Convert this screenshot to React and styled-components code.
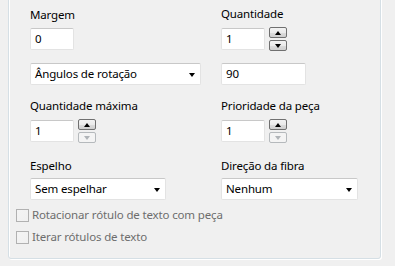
import React from "react";
import styled, { createGlobalStyle } from "styled-components";

const Global = createGlobalStyle`
  html, body { margin: 0; padding: 0; background: #f0f0f0; }
  body { font-family: "Noto Sans", "Segoe UI", sans-serif; font-size: 11.5px; letter-spacing: -0.15px; color: #000; }
  * { box-sizing: border-box; }
`;

const Page = styled.div`
  width: 395px;
  height: 266px;
  overflow: hidden;
  background: #f0f0f0;
`;

const Group = styled.div`
  margin: -10px 0 0 8px;
  width: 373px;
  border: 1px solid #d5dfe5;
  border-radius: 3px;
  box-shadow: inset 1px 1px 0 #fff, 1px 1px 0 #fff;
  padding: 15px 0 13px 7px;
`;

const Fields = styled.div`
  padding-left: 14px;
`;

const Row = styled.div`
  display: grid;
  grid-template-columns: 191px 1fr;
  align-items: start;
  margin-top: ${(p) => p.$top || 0}px;
`;

const Field = styled.div`
  display: flex;
  flex-direction: column;
  align-items: flex-start;
  padding-top: ${(p) => p.$offset || 0}px;
`;

const Label = styled.div`
  line-height: 16px;
  height: 16px;
  margin-bottom: ${(p) => p.$gap ?? 5}px;
  white-space: nowrap;
`;

const Controls = styled.div`
  display: flex;
  align-items: center;
  gap: 4px;
  height: ${(p) => (p.$spin ? 24 : 22)}px;
`;

const Box = styled.div`
  width: ${(p) => p.$w}px;
  height: 22px;
  background: #fff;
  border: 1px solid #e3e3e3;
  border-top-color: #c8c8c8;
  border-radius: 2px;
  display: flex;
  align-items: center;
  padding: 0 4px;
  line-height: 16px;
  white-space: nowrap;
  position: relative;
`;

const Caret = styled.span`
  position: absolute;
  right: 5px;
  top: 9px;
  width: 0;
  height: 0;
  border-left: 3.5px solid transparent;
  border-right: 3.5px solid transparent;
  border-top: 4px solid #000;
`;

const SpinStack = styled.div`
  display: flex;
  flex-direction: column;
  gap: 2px;
`;

const SpinBtn = styled.div`
  width: 18px;
  height: 11px;
  border: 1px solid ${(p) => (p.$disabled ? "#b5b9bc" : "#707070")};
  border-radius: 2px;
  background: ${(p) =>
    p.$disabled
      ? "#f4f4f4"
      : "linear-gradient(#f2f2f2 0%, #ebebeb 50%, #dddddd 51%, #cfcfcf 100%)"};
  display: flex;
  align-items: center;
  justify-content: center;
`;

const Arrow = styled.span`
  width: 0;
  height: 0;
  border-left: 3.5px solid transparent;
  border-right: 3.5px solid transparent;
  ${(p) =>
    p.$down
      ? `border-top: 4px solid ${p.$disabled ? "#b0b4b8" : "#000"};`
      : `border-bottom: 4px solid ${p.$disabled ? "#b0b4b8" : "#000"};`}
`;

const Checks = styled.div`
  display: flex;
  flex-direction: column;
  gap: 6px;
  margin-top: 7px;
`;

const CheckRow = styled.label`
  display: flex;
  align-items: center;
  gap: 3px;
  height: 16px;
  line-height: 16px;
  color: #6d6d6d;
  white-space: nowrap;
`;

const CheckBox = styled.span`
  width: 13px;
  height: 13px;
  border: 1px solid #b1b1b1;
  background: linear-gradient(135deg, #f4f4f4, #f0f0f0);
`;

function Spin({ downDisabled }) {
  return (
    <SpinStack>
      <SpinBtn>
        <Arrow />
      </SpinBtn>
      <SpinBtn $disabled={downDisabled}>
        <Arrow $down $disabled={downDisabled} />
      </SpinBtn>
    </SpinStack>
  );
}

export default function App() {
  return (
    <Page>
      <Global />
      <Group>
        <Fields>
          <Row>
            <Field $offset={1}>
              <Label $gap={5}>Margem</Label>
              <Controls>
                <Box $w={44}>0</Box>
              </Controls>
            </Field>
            <Field>
              <Label $gap={5}>Quantidade</Label>
              <Controls $spin>
                <Box $w={44}>1</Box>
                <Spin />
              </Controls>
            </Field>
          </Row>
          <Row $top={12}>
            <Field>
              <Box $w={171}>
                Ângulos de rotação
                <Caret />
              </Box>
            </Field>
            <Field>
              <Box $w={85}>90</Box>
            </Field>
          </Row>
          <Row $top={13}>
            <Field>
              <Label $gap={5}>Quantidade máxima</Label>
              <Controls $spin>
                <Box $w={44}>1</Box>
                <Spin downDisabled />
              </Controls>
            </Field>
            <Field>
              <Label $gap={5}>Prioridade da peça</Label>
              <Controls $spin>
                <Box $w={44}>1</Box>
                <Spin downDisabled />
              </Controls>
            </Field>
          </Row>
          <Row $top={15}>
            <Field>
              <Label $gap={4}>Espelho</Label>
              <Box $w={136}>
                Sem espelhar
                <Caret />
              </Box>
            </Field>
            <Field>
              <Label $gap={4}>Direção da fibra</Label>
              <Box $w={137}>
                Nenhum
                <Caret />
              </Box>
            </Field>
          </Row>
        </Fields>
        <Checks>
          <CheckRow>
            <CheckBox />
            Rotacionar rótulo de texto com peça
          </CheckRow>
          <CheckRow>
            <CheckBox />
            Iterar rótulos de texto
          </CheckRow>
        </Checks>
      </Group>
    </Page>
  );
}
